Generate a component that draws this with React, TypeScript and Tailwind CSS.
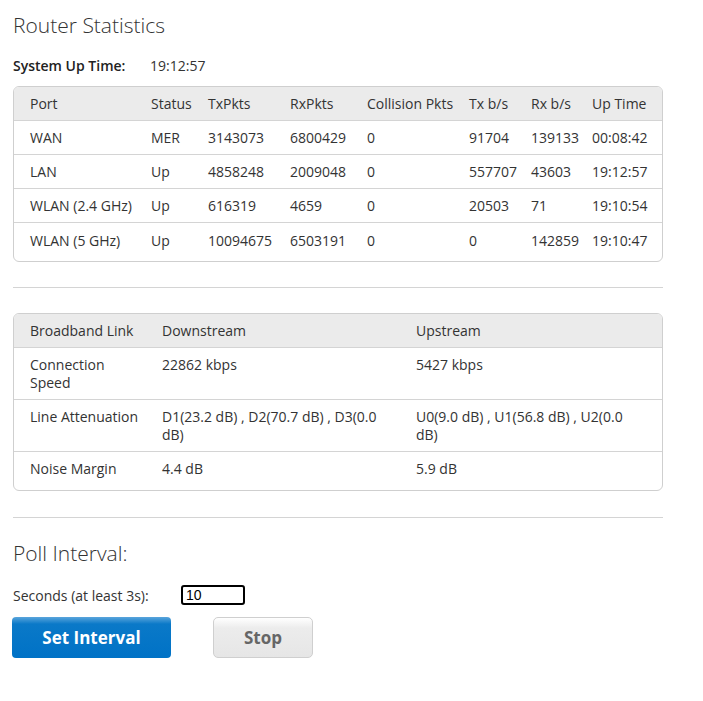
import React from 'react';

const ports = [
  ['WAN', 'MER', '3143073', '6800429', '0', '91704', '139133', '00:08:42'],
  ['LAN', 'Up', '4858248', '2009048', '0', '557707', '43603', '19:12:57'],
  ['WLAN (2.4 GHz)', 'Up', '616319', '4659', '0', '20503', '71', '19:10:54'],
  ['WLAN (5 GHz)', 'Up', '10094675', '6503191', '0', '0', '142859', '19:10:47'],
];

const portCols = 'grid grid-cols-[121px_57px_82px_77px_102px_62px_61px_1fr] pl-4';
const linkCols = 'grid grid-cols-[132px_254px_1fr] pl-4';

const links = [
  ['Connection Speed', '22862 kbps', '5427 kbps'],
  ['Line Attenuation', 'D1(23.2 dB) , D2(70.7 dB) , D3(0.0 dB)', 'U0(9.0 dB) , U1(56.8 dB) , U2(0.0 dB)'],
  ['Noise Margin', '4.4 dB', '5.9 dB'],
];

export default function App() {
  return (
    <div className="min-h-[701px] bg-white px-[13px] pt-[10px] text-[14px] text-[#333] font-['Open_Sans',sans-serif]">
      <h1 className="text-[21px] font-light leading-[30px] text-[#333]">Router Statistics</h1>

      <div className="mt-[15px] flex items-center h-[20px]">
        <span className="w-[137px] font-semibold text-[#222]">System Up Time:</span>
        <span>19:12:57</span>
      </div>

      <div className="mt-[11px] w-[650px] rounded-[6px] border border-[#cfcfcf] overflow-hidden pb-[4px]">
        <div className={`${portCols} h-[34px] items-center bg-[#ebebeb] border-b border-[#d4d4d4]`}>
          {['Port', 'Status', 'TxPkts', 'RxPkts', 'Collision Pkts', 'Tx b/s', 'Rx b/s', 'Up Time'].map((h) => (
            <div key={h} className="whitespace-nowrap">{h}</div>
          ))}
        </div>
        {ports.map((row, i) => (
          <div
            key={row[0]}
            className={`${portCols} h-[34px] items-center ${i < ports.length - 1 ? 'border-b border-[#d4d4d4]' : ''}`}
          >
            {row.map((c, j) => (
              <div key={j} className="whitespace-nowrap">{c}</div>
            ))}
          </div>
        ))}
      </div>

      <hr className="mt-[25px] w-[650px] border-t border-[#d4d4d4]" />

      <div className="mt-[25px] w-[650px] rounded-[6px] border border-[#cfcfcf] overflow-hidden pb-[4px]">
        <div className={`${linkCols} h-[34px] items-center bg-[#ebebeb] border-b border-[#d4d4d4]`}>
          <div>Broadband Link</div>
          <div>Downstream</div>
          <div>Upstream</div>
        </div>
        {links.map((row, i) => (
          <div
            key={row[0]}
            className={`${linkCols} pt-[8px] leading-[18px] ${i < links.length - 1 ? 'h-[52px] border-b border-[#d4d4d4]' : 'h-[34px]'}`}
          >
            <div className="pr-4">{row[0]}</div>
            <div className="pr-4">{row[1]}</div>
            <div className="pr-4">{row[2]}</div>
          </div>
        ))}
      </div>

      <hr className="mt-[26px] w-[650px] border-t border-[#d4d4d4]" />

      <h2 className="mt-[20px] text-[21px] font-light leading-[30px] text-[#333]">Poll Interval:</h2>

      <div className="mt-[16px] flex items-center h-[22px]">
        <span className="w-[168px]">Seconds (at least 3s):</span>
        <input
          defaultValue="10"
          className="w-[64px] h-[20px] rounded-[3px] border-2 border-black px-[3px] text-[14px] text-black font-['Liberation_Sans',sans-serif] outline-none"
        />
      </div>

      <div className="mt-[11px] flex gap-[42px] -ml-[1px]">
        <button className="w-[159px] h-[41px] rounded-[4px] bg-[linear-gradient(#5aa5dc_0px,#0a79c8_7px,#0072c6_100%)] text-white text-[17px] font-bold">
          Set Interval
        </button>
        <button className="w-[100px] h-[41px] rounded-[5px] border border-[#cfcfcf] bg-[linear-gradient(#ffffff_0px,#ececec_10px,#e6e6e6_100%)] text-[#666] text-[17px] font-bold">
          Stop
        </button>
      </div>
    </div>
  );
}
